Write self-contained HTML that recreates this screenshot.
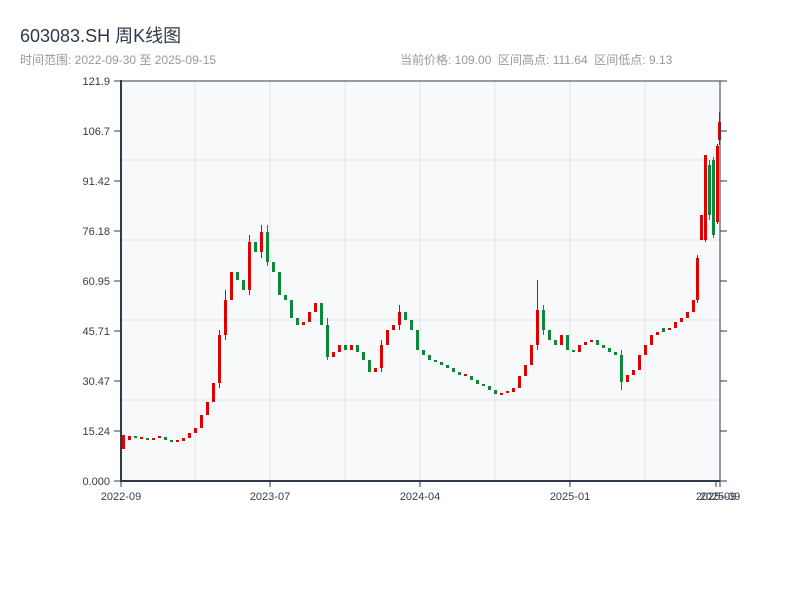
<!DOCTYPE html>
<html><head><meta charset="utf-8"><style>
body{margin:0;width:800px;height:600px;background:#fff;overflow:hidden;font-family:"Liberation Sans","Noto Sans CJK SC",sans-serif}
.t{position:absolute;left:20px;top:22px;font-size:18px;color:#2e3a4a}
.s{position:absolute;top:51px;font-size:12px;color:#999}
</style></head><body>
<svg width="800" height="600" style="position:absolute;left:0;top:0" font-family="Liberation Sans, sans-serif" font-size="11" fill="#333d4a">
<rect x="121" y="81" width="599" height="400" fill="#f7f9fb"/>
<g stroke="#e0e3e8">
<line x1="195" y1="81" x2="195" y2="481"/><line x1="270" y1="81" x2="270" y2="481"/><line x1="345" y1="81" x2="345" y2="481"/><line x1="420" y1="81" x2="420" y2="481"/><line x1="495" y1="81" x2="495" y2="481"/><line x1="570" y1="81" x2="570" y2="481"/><line x1="645" y1="81" x2="645" y2="481"/>
<line x1="121" y1="160" x2="720" y2="160"/><line x1="121" y1="240" x2="720" y2="240"/><line x1="121" y1="320" x2="720" y2="320"/><line x1="121" y1="400" x2="720" y2="400"/>
</g>
<path stroke="#e00000" stroke-width="3" fill="none" d="M123.5,435V449M129.5,436V440M141.5,437V439M153.5,438V440M159.5,436V438M177.5,440V442M183.5,438V441M189.5,433V438M195.5,428V433M201.5,415V428M207.5,402V415M213.5,383V402M219.5,335V383M225.5,300V335M231.5,272V300M249.5,242V290M261.5,232V252M303.5,322V325M309.5,312V322M315.5,303V312M333.5,352V357M339.5,345V352M351.5,345V350M375.5,368V372M381.5,345V368M387.5,330V345M393.5,325V330M399.5,312V325M465.5,374V376M501.5,393V395M507.5,391V393M513.5,388V392M519.5,376V388M525.5,365V376M531.5,345V365M537.5,310V345M561.5,335V345M579.5,345V352M585.5,342V345M591.5,340V342M627.5,375V382M633.5,370V375M639.5,355V370M645.5,345V355M651.5,335V345M657.5,332V335M669.5,328V330M675.5,322V328M681.5,318V322M687.5,312V318M693.5,300V312M697.5,258V300M701.5,215V240M705.5,155V240M717.5,146V222M719.5,122V140"/>
<path stroke="#0a8a38" stroke-width="3" fill="none" d="M135.5,436V438M147.5,438V440M165.5,437V440M171.5,440V442M237.5,272V280M243.5,280V290M255.5,242V252M267.5,232V262M273.5,262V272M279.5,272V295M285.5,295V300M291.5,300V318M297.5,318V325M321.5,303V325M327.5,325V357M345.5,345V350M357.5,345V352M363.5,352V360M369.5,360V372M405.5,312V320M411.5,320V330M417.5,330V350M423.5,350V355M429.5,355V360M435.5,360V362M441.5,362V365M447.5,365V368M453.5,368V372M459.5,372V375M471.5,376V380M477.5,380V384M483.5,384V386M489.5,386V390M495.5,390V394M543.5,310V330M549.5,330V340M555.5,340V345M567.5,335V350M573.5,350V352M597.5,340V345M603.5,345V348M609.5,348V352M615.5,352V355M621.5,355V382M663.5,328V332M709.5,165V215M713.5,160V235"/>
<path stroke="#e00000" stroke-width="1" fill="none" d="M219.5,330V388M225.5,290V340M249.5,235V295M261.5,225V258M381.5,340V372M399.5,305V330M537.5,280V350M697.5,255V303M705.5,157V242M717.5,144V224M719.5,112V145"/>
<path stroke="#0a8a38" stroke-width="1" fill="none" d="M267.5,225V266M327.5,318V360M543.5,305V335M621.5,350V390M709.5,160V220M713.5,157V238"/>
<g stroke="#2e3a4a">
<line x1="121" y1="81" x2="720" y2="81"/><line x1="720" y1="81" x2="720" y2="481"/>
<line x1="121" y1="80" x2="121" y2="482" stroke-width="2"/><line x1="120" y1="481" x2="720" y2="481" stroke-width="2"/>
<path d="M114,81H121M114,131H121M114,181H121M114,231H121M114,281H121M114,331H121M114,381H121M114,431H121M114,481H121M720,81H727M720,131H727M720,181H727M720,231H727M720,281H727M720,331H727M720,381H727M720,431H727M720,481H727M121,481V487M270,481V487M420,481V487M570,481V487M716,481V487M720,481V487"/>
</g>
<g text-anchor="end">
<text x="110" y="85">121.9</text><text x="110" y="135">106.7</text><text x="110" y="185">91.42</text><text x="110" y="235">76.18</text><text x="110" y="285">60.95</text><text x="110" y="335">45.71</text><text x="110" y="385">30.47</text><text x="110" y="435">15.24</text><text x="110" y="485">0.000</text>
</g>
<g text-anchor="middle">
<text x="121" y="500">2022-09</text><text x="270" y="500">2023-07</text><text x="420" y="500">2024-04</text><text x="570" y="500">2025-01</text><text x="716" y="500">2025-09</text><text x="720" y="500">2025-09</text>
</g>
</svg>
<div class="t">603083.SH 周K线图</div>
<div class="s" style="left:20px">时间范围: 2022-09-30 至 2025-09-15</div>
<div class="s" style="left:400px">当前价格: 109.00&nbsp;&nbsp;区间高点: 111.64&nbsp;&nbsp;区间低点: 9.13</div>
</body></html>
